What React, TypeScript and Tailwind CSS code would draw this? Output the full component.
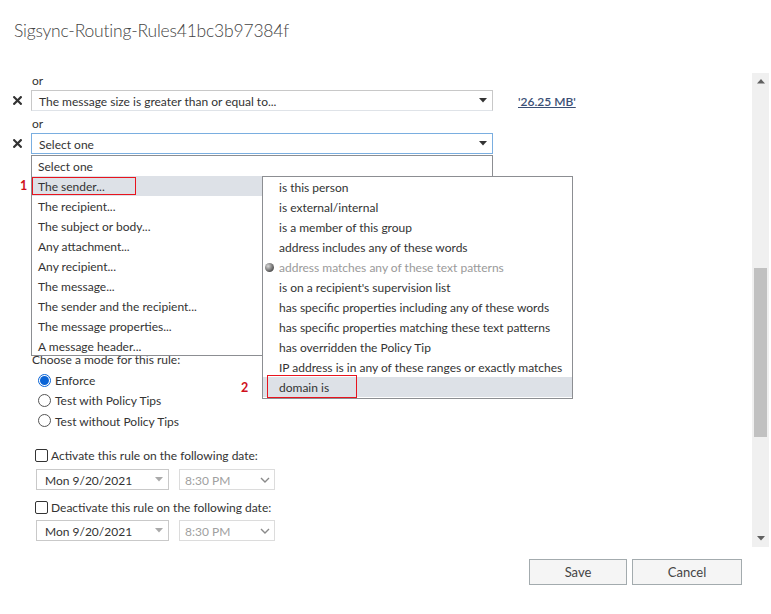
import React from "react";

const FONT = { fontFamily: "Lato, 'Liberation Sans', sans-serif" };

function XIcon() {
  return (
    <svg width="9" height="9" viewBox="0 0 9 9" className="block">
      <path d="M1.2 1.2 L7.8 7.8 M7.8 1.2 L1.2 7.8" stroke="#333" strokeWidth="2.2" strokeLinecap="square" />
    </svg>
  );
}

function Caret({ color = "#333" }: { color?: string }) {
  return (
    <svg width="8" height="5" viewBox="0 0 8 5" className="block">
      <path d="M0 0 L8 0 L4 4.5 Z" fill={color} />
    </svg>
  );
}

function Chevron() {
  return (
    <svg width="10" height="6" viewBox="0 0 10 6" className="block">
      <path d="M1 1 L5 5 L9 1" stroke="#8a8a8a" strokeWidth="1.4" fill="none" />
    </svg>
  );
}

const senderItems = [
  "Select one",
  "The sender...",
  "The recipient...",
  "The subject or body...",
  "Any attachment...",
  "Any recipient...",
  "The message...",
  "The sender and the recipient...",
  "The message properties...",
  "A message header...",
];

const subItems = [
  "is this person",
  "is external/internal",
  "is a member of this group",
  "address includes any of these words",
  "address matches any of these text patterns",
  "is on a recipient's supervision list",
  "has specific properties including any of these words",
  "has specific properties matching these text patterns",
  "has overridden the Policy Tip",
  "IP address is in any of these ranges or exactly matches",
  "domain is",
];

function Radio({ checked }: { checked?: boolean }) {
  if (checked) {
    return (
      <span className="w-[13px] h-[13px] rounded-full border border-[#0a64d6] bg-white flex items-center justify-center">
        <span className="w-[9px] h-[9px] rounded-full bg-[#0a64d6]" />
      </span>
    );
  }
  return <span className="w-[13px] h-[13px] rounded-full border border-[#555] bg-white" />;
}

function Checkbox() {
  return <span className="w-[13px] h-[13px] rounded-[2px] border border-[#333] bg-white" />;
}

function DateRow() {
  return (
    <div className="flex items-center h-[21px] pl-[36px] gap-[10px]">
      <div className="w-[133px] h-[21px] border border-[#c9c9c9] bg-white flex items-center justify-between pl-[8px] pr-[5px] text-[12px] text-[#333]">
        <span className="pt-[2px]">Mon 9/20/2021</span>
        <Caret color="#aaa" />
      </div>
      <div className="w-[96px] h-[21px] border border-[#dcdcdc] bg-white flex items-center justify-between pl-[5px] pr-[4px] text-[12px] text-[#a0a0a0]">
        <span className="pt-[2px]">8:30 PM</span>
        <Chevron />
      </div>
    </div>
  );
}

export default function App() {
  return (
    <div className="w-[771px] h-[614px] bg-white text-[#333] overflow-hidden" style={FONT}>
      {/* Title */}
      <div className="h-[73px] pt-[18px] pl-[14px]">
        <div className="text-[17.5px] leading-[26px] font-light tracking-[-0.2px] text-[#444]">Sigsync-Routing-Rules41bc3b97384f</div>
      </div>

      {/* Scroll area */}
      <div className="flex h-[474px]">
        <div className="w-[752px] h-[474px] overflow-hidden relative text-[12px]">
          <div className="h-[17px] pl-[32px] pt-[1px] leading-[13px]">or</div>
          <div className="flex items-center h-[21px]">
            <div className="w-[31px] flex justify-center pl-[7px] pr-[4px]">
              <XIcon />
            </div>
            <div className="w-[462px] h-[21px] border border-[#c8c8c8] border-b-[#dfe3e8] bg-white flex items-center justify-between pl-[7px] pr-[5px]">
              <span className="pt-[2px]">The message size is greater than or equal to...</span>
              <Caret />
            </div>
            <a className="ml-[25px] pt-[2px] font-semibold underline text-[#3a4f75]">'26.25 MB'</a>
          </div>
          <div className="h-[22px] pl-[32px] pt-[6px] leading-[14px]">or</div>
          <div className="flex items-center h-[21px]">
            <div className="w-[31px] flex justify-center pl-[7px] pr-[4px]">
              <XIcon />
            </div>
            <div className="relative w-[462px] h-[21px]">
              <div className="w-[462px] h-[21px] border border-[#7aaee0] bg-white flex items-center justify-between pl-[7px] pr-[5px]">
                <span className="pt-[2px]">Select one</span>
                <Caret />
              </div>
              {/* Dropdown list */}
              <div className="absolute left-0 top-[22px] w-[462px] h-[201px] border border-[#8c8e92] bg-white z-10">
                {senderItems.map((t, i) => (
                  <div
                    key={t}
                    className={`h-[20px] leading-[20px] pt-[1px] pl-[6px] ${i === 1 ? "bg-[#dde1e7]" : ""}`}
                  >
                    {t}
                  </div>
                ))}
                <div className="absolute left-[0px] top-[21px] w-[104px] h-[18px] border border-[#e8141e]" />
                <div className="absolute left-[-12px] top-[22px] text-[12.5px] leading-[16px] font-bold text-[#d0101c]">1</div>

                {/* Submenu */}
                <div className="absolute left-[230px] top-[20px] w-[311px] h-[223px] border border-[#8c8e92] bg-white z-20">
                  {subItems.map((t, i) => (
                    <div
                      key={t}
                      className={`relative h-[20px] leading-[20px] pt-[1px] pl-[16px] whitespace-nowrap ${i === 10 ? "bg-[#dde1e7]" : ""} ${i === 4 ? "text-[#9a9a9a]" : ""}`}
                    >
                      {i === 4 && (
                        <span className="absolute left-[2px] top-[6px] w-[9px] h-[9px] rounded-full bg-[radial-gradient(circle_at_35%_35%,#d8d8d8,#555_70%)]" />
                      )}
                      {t}
                    </div>
                  ))}
                  <div className="absolute left-[4px] top-[198px] w-[90px] h-[23px] border border-[#e8141e]" />
                  <div className="absolute left-[-22px] top-[203px] text-[12.5px] leading-[16px] font-bold text-[#d0101c]">2</div>
                </div>
              </div>
            </div>
          </div>

          <div className="mt-[197px] h-[16px] leading-[16px] pt-[1px] pl-[32px]">Choose a mode for this rule:</div>
          <div className="mt-[3px] pl-[38px]">
            <div className="flex items-center gap-[4px] h-[20px]">
              <Radio checked />
              <span className="pt-[2px]">Enforce</span>
            </div>
            <div className="flex items-center gap-[4px] h-[20px]">
              <Radio />
              <span className="pt-[2px]">Test with Policy Tips</span>
            </div>
            <div className="flex items-center gap-[4px] h-[21px]">
              <Radio />
              <span className="pt-[2px]">Test without Policy Tips</span>
            </div>
          </div>

          <div className="mt-[14px] flex items-center gap-[3px] h-[20px] pl-[35px]">
            <Checkbox />
            <span className="pt-[2px]">Activate this rule on the following date:</span>
          </div>
          <div className="mt-[4px]">
            <DateRow />
          </div>
          <div className="mt-[7px] flex items-center gap-[3px] h-[20px] pl-[35px]">
            <Checkbox />
            <span className="pt-[2px]">Deactivate this rule on the following date:</span>
          </div>
          <div className="mt-[3px]">
            <DateRow />
          </div>
        </div>

        {/* Scrollbar */}
        <div className="w-[17px] h-[474px] bg-[#f0f0f0] flex flex-col items-center">
          <div className="h-[17px] flex items-center justify-center">
            <svg width="8" height="5" viewBox="0 0 8 5"><path d="M0 4.5 L8 4.5 L4 0 Z" fill="#606060" /></svg>
          </div>
          <div className="mt-[178px] w-[13px] h-[169px] bg-[#c1c1c1]" />
          <div className="flex-1" />
          <div className="h-[17px] flex items-center justify-center">
            <svg width="8" height="5" viewBox="0 0 8 5"><path d="M0 0 L8 0 L4 4.5 Z" fill="#606060" /></svg>
          </div>
        </div>
      </div>

      {/* Footer */}
      <div className="flex justify-end gap-[5px] pt-[12px] pr-[29px]">
        <button className="w-[98px] h-[26px] pt-[1px] border border-[#a3abae] bg-[#f5f5f5] text-[13px] text-[#444]">Save</button>
        <button className="w-[110px] h-[26px] pt-[1px] border border-[#a3abae] bg-[#f5f5f5] text-[13px] text-[#444]">Cancel</button>
      </div>
    </div>
  );
}
